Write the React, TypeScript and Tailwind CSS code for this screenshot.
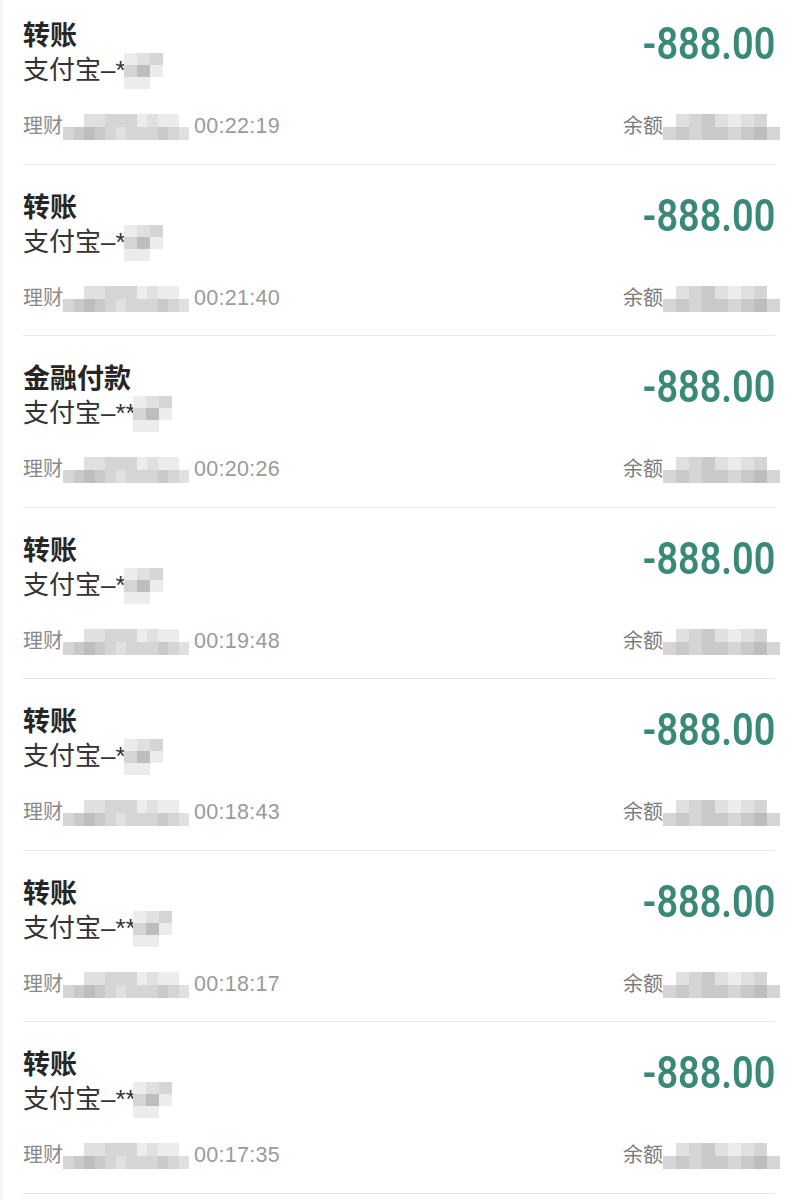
import React from 'react';

type Row = { title: string; time: string; starCut: boolean };

const rows: Row[] = [
    { title: '转账', time: '00:22:19', starCut: true },
    { title: '转账', time: '00:21:40', starCut: true },
    { title: '金融付款', time: '00:20:26', starCut: false },
    { title: '转账', time: '00:19:48', starCut: true },
    { title: '转账', time: '00:18:43', starCut: true },
    { title: '转账', time: '00:18:17', starCut: false },
    { title: '转账', time: '00:17:35', starCut: false },
];

const shade: Record<string, string> = {
    a: 'bg-[#b0b0b0]',
    b: 'bg-[#bdbdbd]',
    c: 'bg-[#c9c9c9]',
    d: 'bg-[#d5d5d5]',
    e: 'bg-[#e0e0e0]',
    f: 'bg-[#ececec]',
    '.': 'bg-transparent',
};

// pixelated cover over the private bits of each row
const Mosaic: React.FC<{ pattern: string[]; cell: string; className?: string }> = ({ pattern, cell, className }) => (
    <div className={`flex flex-col blur-[0.7px] ${className ?? ''}`}>
        {pattern.map((line, i) => (
            <div key={i} className="flex">
                {line.split('').map((k, j) => (
                    <div key={j} className={`${cell} ${shade[k]}`} />
                ))}
            </div>
        ))}
    </div>
);

const namePattern = ['fed', 'dbf', 'ff.'];
const memoPattern = ['..eedddfeff.', 'dcbcdedddcde'];
const balancePattern = ['.edcefed.', 'dcdccdcbd'];

const TxRow: React.FC<{ row: Row; first: boolean }> = ({ row, first }) => (
    <div className={`flex justify-between border-b border-[#e8e8e8] ${first ? 'pt-[19px]' : 'pt-[26px]'} pb-[22.5px]`}>
        <div className="flex flex-col">
            <div className="h-[34px] text-[27px] leading-[34px] font-semibold text-[#262626]">{row.title}</div>
            <div className="flex items-center h-[34px] text-[26px] leading-[34px] text-[#333333]">
                <span>支付宝–**</span>
                <Mosaic
                    pattern={namePattern}
                    cell="w-[13px] h-[12px]"
                    className={`relative ${row.starCut ? '-ml-[12px]' : '-ml-[3px]'} mt-[2px]`}
                />
            </div>
            <div className="flex items-center h-[30px] mt-[24px]">
                <span className="text-[20px] leading-[30px] text-[#8a8a8a]">理财</span>
                <Mosaic pattern={memoPattern} cell="w-[10.5px] h-[13px]" className="mt-[2px]" />
                <span className="ml-[5px] text-[21.5px] leading-[30px] text-[#9a9a9a] tracking-[0.3px]">{row.time}</span>
            </div>
        </div>
        <div className="flex flex-col items-end justify-between">
            <div
                className="mt-[3px] h-[44px] text-[44px] leading-[44px] font-semibold text-[#3a8878] origin-right scale-x-[0.86]"
                style={{ fontFamily: 'Roboto, "Liberation Sans", sans-serif' }}
            >
                -888.00
            </div>
            <div className="flex items-center h-[30px] -mr-[5px]">
                <span className="text-[20px] leading-[30px] text-[#7a7a7a]">余额</span>
                <Mosaic pattern={balancePattern} cell="w-[13px] h-[13px]" className="mt-[2px]" />
            </div>
        </div>
    </div>
);

export default function App() {
    return (
        <div
            className="w-[808px] h-[1200px] overflow-hidden bg-white border-l-[3px] border-[#f4f5f6]"
            style={{ fontFamily: '"Liberation Sans", "Noto Sans CJK SC", sans-serif' }}
        >
            <div className="pl-[20px] pr-[33px]">
                {rows.map((row, i) => (
                    <TxRow key={i} row={row} first={i === 0} />
                ))}
            </div>
        </div>
    );
}
